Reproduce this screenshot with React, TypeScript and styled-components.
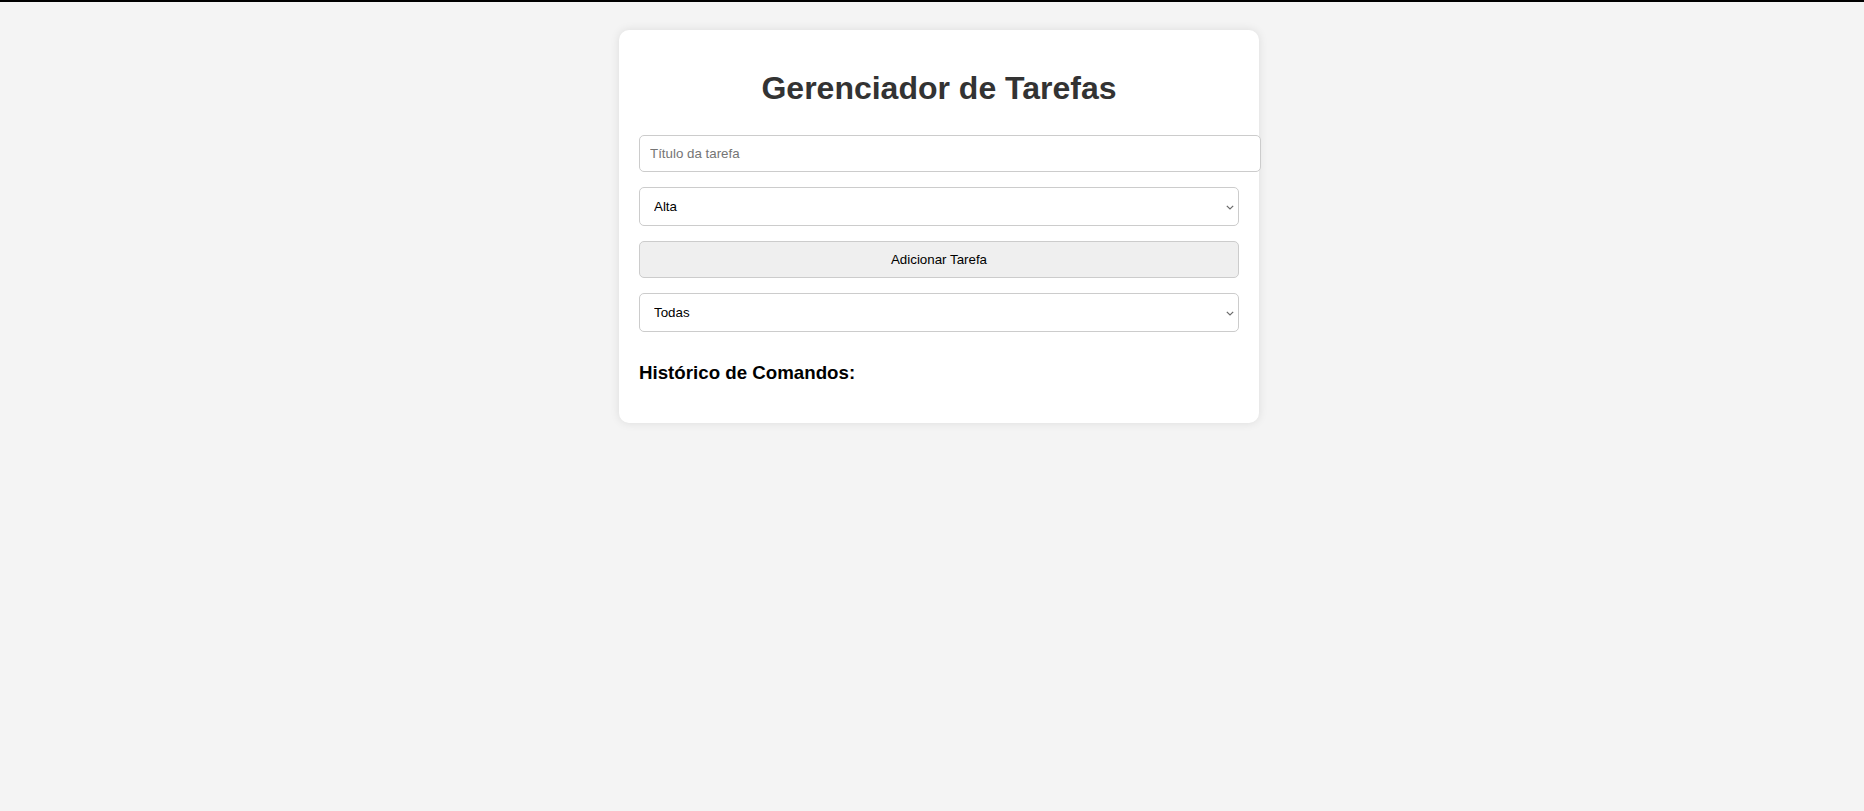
import React from 'react';
import styled, { createGlobalStyle } from 'styled-components';

type Priority = 'Alta' | 'Média' | 'Baixa';

interface Task {
  id: number;
  title: string;
  priority: Priority;
}

const GlobalStyle = createGlobalStyle`
  html, body {
    margin: 0;
    padding: 0;
  }
  body {
    background-color: #f4f4f4;
    font-family: "Liberation Sans", Arial, sans-serif;
  }
`;

const Chevron = () => (
  <ChevronIcon width="8" height="5" viewBox="0 0 8 5" aria-hidden>
    <path d="M0.8 0.8 L4 4 L7.2 0.8" fill="none" stroke="#6b6b6b" strokeWidth="1.2" />
  </ChevronIcon>
);

export default function App() {
  const [title, setTitle] = React.useState<string>('');
  const [priority, setPriority] = React.useState<Priority>('Alta');
  const [filter, setFilter] = React.useState<string>('Todas');
  const [tasks, setTasks] = React.useState<Task[]>([]);
  const [history, setHistory] = React.useState<string[]>([]);

  const addTask = () => {
    if (!title.trim()) return;
    setTasks((prev) => [...prev, { id: Date.now(), title: title.trim(), priority }]);
    setHistory((prev) => [...prev, `Adicionar: ${title.trim()} (${priority})`]);
    setTitle('');
  };

  const visible = tasks.filter((t) => (filter === 'Todas' ? true : t.priority === filter));

  return (
    <>
      <GlobalStyle />
      <TopBar />
      <Page>
        <Card>
          <Title>Gerenciador de Tarefas</Title>
          <TextInput
            type="text"
            placeholder="Título da tarefa"
            value={title}
            onChange={(e) => setTitle(e.target.value)}
          />
          <SelectWrap>
            <Select value={priority} onChange={(e) => setPriority(e.target.value as Priority)}>
              <option value="Alta">Alta</option>
              <option value="Média">Média</option>
              <option value="Baixa">Baixa</option>
            </Select>
            <Chevron />
          </SelectWrap>
          <Button onClick={addTask}>Adicionar Tarefa</Button>
          <SelectWrap last>
            <Select value={filter} onChange={(e) => setFilter(e.target.value)}>
              <option value="Todas">Todas</option>
              <option value="Alta">Alta</option>
              <option value="Média">Média</option>
              <option value="Baixa">Baixa</option>
            </Select>
            <Chevron />
          </SelectWrap>
          {visible.length > 0 && (
            <TaskList>
              {visible.map((t) => (
                <TaskItem key={t.id}>
                  {t.title} - {t.priority}
                </TaskItem>
              ))}
            </TaskList>
          )}
          <HistoryTitle>Histórico de Comandos:</HistoryTitle>
          {history.length > 0 && (
            <TaskList>
              {history.map((h, i) => (
                <TaskItem key={i}>{h}</TaskItem>
              ))}
            </TaskList>
          )}
        </Card>
      </Page>
    </>
  );
}

const TopBar = styled.div`
  height: 2px;
  background-color: #000;
`;

const Page = styled.div`
  display: flex;
  justify-content: center;
  align-items: flex-start;
  min-height: calc(100vh - 2px);
  padding: 28px 0 0 14px;
  box-sizing: border-box;
  background-color: #f4f4f4;
`;

const Card = styled.div`
  width: 640px;
  box-sizing: border-box;
  padding: 20px;
  background-color: #fff;
  border-radius: 10px;
  box-shadow: 0 0 10px rgba(0, 0, 0, 0.1);
`;

const Title = styled.h1`
  margin: 20px 0 28px;
  font-size: 32px;
  font-weight: bold;
  color: #333;
  text-align: center;
  font-family: "Liberation Sans", Arial, sans-serif;
`;

const TextInput = styled.input`
  display: block;
  width: 100%;
  padding: 10px;
  margin: 0 0 15px;
  border: 1px solid #ccc;
  border-radius: 5px;
  font-size: 13.333px;
  font-family: "Liberation Sans", Arial, sans-serif;
  color: #000;
  outline: none;

  &::placeholder {
    color: #757575;
  }
`;

const SelectWrap = styled.div<{ last?: boolean }>`
  position: relative;
  margin: 0 0 ${({ last }) => (last ? 0 : 15)}px;
`;

const Select = styled.select`
  display: block;
  width: 100%;
  height: 39px;
  box-sizing: border-box;
  padding: 10px 24px 10px 14px;
  border: 1px solid #ccc;
  border-radius: 5px;
  background-color: #fff;
  appearance: none;
  -webkit-appearance: none;
  font-size: 13.333px;
  font-family: "Liberation Sans", Arial, sans-serif;
  color: #000;
  outline: none;
`;

const ChevronIcon = styled.svg`
  position: absolute;
  right: 5px;
  top: 50%;
  margin-top: -2px;
  pointer-events: none;
`;

const Button = styled.button`
  display: block;
  width: 100%;
  height: 37px;
  margin: 0 0 15px;
  border: 1px solid #ccc;
  border-radius: 5px;
  background-color: #efefef;
  font-size: 13.333px;
  font-family: "Liberation Sans", Arial, sans-serif;
  color: #000;
  cursor: pointer;

  &:hover {
    background-color: #e5e5e5;
  }
`;

const TaskList = styled.ul`
  margin: 15px 0 0;
  padding: 0;
  list-style: none;
`;

const TaskItem = styled.li`
  padding: 8px 0;
  font-size: 14px;
  border-bottom: 1px solid #eee;
`;

const HistoryTitle = styled.h3`
  margin: 30px 0 18.72px;
  font-size: 18.72px;
  font-weight: bold;
  color: #000;
  font-family: "Liberation Sans", Arial, sans-serif;
`;
